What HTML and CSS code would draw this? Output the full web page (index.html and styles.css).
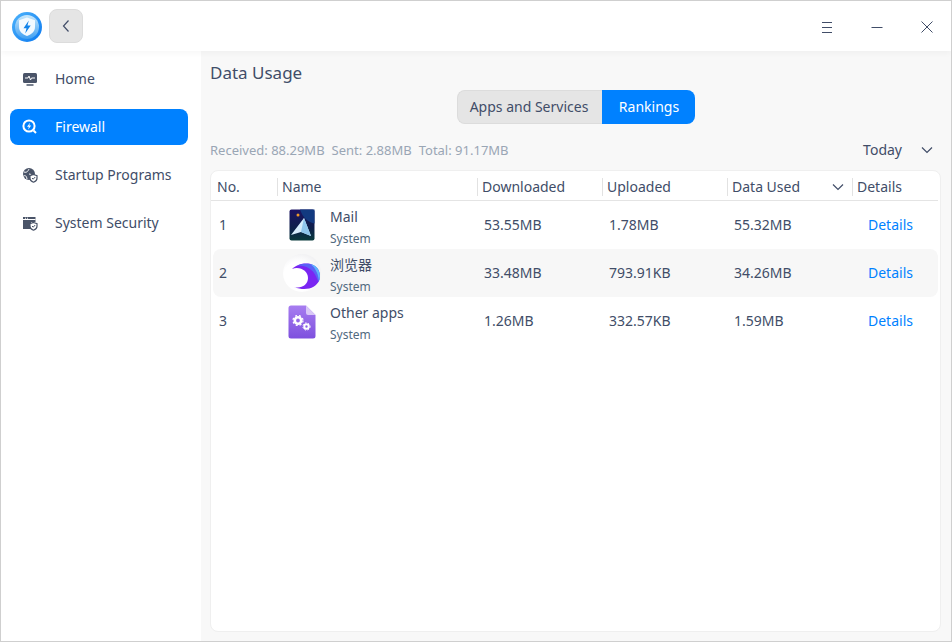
FILE: index.html
```html
<!DOCTYPE html>
<html lang="en">
<head>
    <meta charset="UTF-8">
    <title>Firewall</title>
    <link rel="stylesheet" href="styles.css">
</head>
<body>
<div class="window">
    <header class="title-bar">
        <svg class="app-logo" width="32" height="32" viewBox="0 0 32 32">
            <defs>
                <linearGradient id="logoRing" x1="0" y1="0" x2="1" y2="1">
                    <stop offset="0" stop-color="#4fb4fb"/>
                    <stop offset="1" stop-color="#0a78f0"/>
                </linearGradient>
                <linearGradient id="logoInner" x1="0" y1="0" x2="0" y2="1">
                    <stop offset="0" stop-color="#c9e8fb"/>
                    <stop offset="1" stop-color="#3f9ff2"/>
                </linearGradient>
            </defs>
            <circle cx="16" cy="16" r="15" fill="url(#logoRing)"/>
            <circle cx="16" cy="16" r="12" fill="url(#logoInner)"/>
            <path d="M16 6.500l8 2.800v6.500c0 4.600-3.200 7.700-8 9.200-4.800-1.500-8-4.600-8-9.200V9.300z" fill="#f4faff"/>
            <path d="M17.800 9.500l-5.300 7.700h3l-1.300 5.300 5.500-8h-3.200z" fill="#1283ea"/>
        </svg>
        <button class="back-btn">
            <svg width="10" height="14" viewBox="0 0 10 14"><path d="M7.500 1.500L2.500 7l5 5.500" fill="none" stroke="#414d68" stroke-width="1.200"/></svg>
        </button>
        <div class="win-controls">
            <svg width="12" height="12" viewBox="0 0 12 12"><path d="M1 1.500h10M1 6.500h10M1 11.500h10" stroke="#414d68" stroke-width="1"/></svg>
            <svg width="12" height="12" viewBox="0 0 12 12"><path d="M0.500 6.500h11" stroke="#414d68" stroke-width="1"/></svg>
            <svg width="12" height="12" viewBox="0 0 12 12"><path d="M0.500 0.500l11 11M11.500 0.500l-11 11" stroke="#414d68" stroke-width="1"/></svg>
        </div>
    </header>

    <div class="content">
        <nav class="side-nav">
            <a class="nav-item" href="#">
                <svg width="16" height="16" viewBox="0 0 16 16">
                    <rect x="1" y="2" width="14" height="10" rx="1.500" fill="#4a5468"/>
                    <path d="M3 7h3l1-2 1.500 4 1-2h3.500" fill="none" stroke="#fff" stroke-width="1"/>
                    <path d="M4.500 14h7" stroke="#4a5468" stroke-width="1.500"/>
                </svg>
                Home
            </a>
            <a class="nav-item active" href="#">
                <svg width="16" height="16" viewBox="0 0 16 16">
                    <circle cx="7" cy="7" r="5.600" fill="none" stroke="#fff" stroke-width="2"/>
                    <path d="M8.200 3.500L5 7.800h1.900l-.9 3 3.200-4.400H7.200z" fill="#fff"/>
                    <path d="M11.500 11.500l2.500 2.500" stroke="#fff" stroke-width="2"/>
                </svg>
                Firewall
            </a>
            <a class="nav-item" href="#">
                <svg width="16" height="16" viewBox="0 0 16 16">
                    <circle cx="7" cy="7" r="6" fill="#4a5468"/>
                    <path d="M2 5c3 1 4-1 5-3M7 7c2 0 3 1 2 4M1.500 9c2-1 3 0 3.500 3" fill="none" stroke="#fff" stroke-width="1"/>
                    <path d="M11.500 7.500l3.500 1.200v2.500c0 2-1.500 3.300-3.500 4-2-.7-3.500-2-3.500-4V8.700z" fill="#fff" stroke="#4a5468" stroke-width="1.200"/>
                    <path d="M10 11l1.200 1.200 2-2.200" fill="none" stroke="#4a5468" stroke-width="1"/>
                </svg>
                Startup Programs
            </a>
            <a class="nav-item" href="#">
                <svg width="16" height="16" viewBox="0 0 16 16">
                    <path d="M1 2h12.500v5H9v7H1z" fill="#4a5468"/>
                    <path d="M1 4.500h12.500" stroke="#fff" stroke-width="1"/>
                    <path d="M3 3.200h1M5 3.200h1" stroke="#fff" stroke-width="1"/>
                    <path d="M11.500 7.500l3.500 1.200v2.500c0 2-1.500 3.300-3.500 4-2-.7-3.500-2-3.500-4V8.700z" fill="#fff" stroke="#4a5468" stroke-width="1.200"/>
                    <path d="M10 11l1.200 1.200 2-2.200" fill="none" stroke="#4a5468" stroke-width="1"/>
                </svg>
                System Security
            </a>
        </nav>

        <main class="main-panel">
            <h1 class="page-title">Data Usage</h1>
            <div class="segment">
                <button class="segment-btn">Apps and Services</button>
                <button class="segment-btn selected">Rankings</button>
            </div>
            <div class="summary-row">
                <div class="summary">
                    <span>Received: 88.29MB</span>
                    <span>Sent: 2.88MB</span>
                    <span>Total: 91.17MB</span>
                </div>
                <div class="range-picker">
                    Today
                    <svg width="12" height="8" viewBox="0 0 12 8"><path d="M1 1.500l5 5 5-5" fill="none" stroke="#414d68" stroke-width="1.200"/></svg>
                </div>
            </div>

            <section class="usage-table">
                <div class="table-head">
                    <div class="head-cell">No.</div>
                    <div class="head-cell">Name</div>
                    <div class="head-cell">Downloaded</div>
                    <div class="head-cell">Uploaded</div>
                    <div class="head-cell sort-cell">
                        Data Used
                        <svg width="12" height="8" viewBox="0 0 12 8"><path d="M1 1.500l5 5 5-5" fill="none" stroke="#414d68" stroke-width="1.200"/></svg>
                    </div>
                    <div class="head-cell">Details</div>
                </div>

                <div class="table-row">
                    <div>1</div>
                    <div class="app-cell">
                        <span class="app-icon">
                            <svg width="32" height="36" viewBox="0 0 32 36">
                                <defs>
                                    <linearGradient id="mailBg" x1="0" y1="0" x2="0" y2="1">
                                        <stop offset="0" stop-color="#1c1464"/>
                                        <stop offset="0.6" stop-color="#0d1f4a"/>
                                        <stop offset="1" stop-color="#0a3a3c"/>
                                    </linearGradient>
                                </defs>
                                <rect x="2" y="1" width="28" height="34" rx="3" fill="#fff"/>
                                <rect x="3.500" y="2.500" width="25" height="31" rx="2" fill="url(#mailBg)"/>
                                <path d="M14 2.500h14.500v14c-6-1-12-6-14.500-14z" fill="#123a80"/>
                                <circle cx="12" cy="8" r="1.500" fill="#f09a2a"/>
                                <path d="M18 11L5 28l10-3 10 4z" fill="#d6ecfb"/>
                                <path d="M18 11l-3 14 10 4z" fill="#8fc5ec"/>
                            </svg>
                        </span>
                        <div class="app-text">
                            <span class="app-name">Mail</span>
                            <span class="app-source">System</span>
                        </div>
                    </div>
                    <div>53.55MB</div>
                    <div>1.78MB</div>
                    <div>55.32MB</div>
                    <a class="details-link" href="#">Details</a>
                </div>

                <div class="table-row striped">
                    <div>2</div>
                    <div class="app-cell">
                        <span class="app-icon">
                            <svg width="38" height="38" viewBox="0 0 38 38">
                                <defs>
                                    <radialGradient id="browserBall" cx="0.4" cy="0.6" r="0.65">
                                        <stop offset="0.6" stop-color="#fff"/>
                                        <stop offset="1" stop-color="#f0f0f2"/>
                                    </radialGradient>
                                </defs>
                                <circle cx="19" cy="19" r="19" fill="url(#browserBall)"/>
                                <path d="M9 15C14 10 24 8 30 11C36 14 38 22 36 27C33 33 24 38 11 33C18 35 25 31 25 24C25 17 17 12 9 15z" fill="#7a25f2"/>
                                <path d="M14 11.500C21 8.500 31 9 35 15C38 20 37 25 35.500 28C34 25 33 21 30 17.500C26 13 20 11 14 11.500z" fill="#5a62f6"/>
                                <path d="M27 10C31 10.500 34 13 35.500 16C37.500 20 37 24 36 27C35.500 22 34 18 32 15C31 13 29 11 27 10z" fill="#5db5fb"/>
                            </svg>
                        </span>
                        <div class="app-text">
                            <span class="app-name">浏览器</span>
                            <span class="app-source">System</span>
                        </div>
                    </div>
                    <div>33.48MB</div>
                    <div>793.91KB</div>
                    <div>34.26MB</div>
                    <a class="details-link" href="#">Details</a>
                </div>

                <div class="table-row">
                    <div>3</div>
                    <div class="app-cell">
                        <span class="app-icon doc-icon">
                            <svg width="28" height="34" viewBox="0 0 28 34">
                                <defs>
                                    <linearGradient id="otherBg" x1="0" y1="0" x2="0" y2="1">
                                        <stop offset="0" stop-color="#a77df0"/>
                                        <stop offset="1" stop-color="#7e50de"/>
                                    </linearGradient>
                                </defs>
                                <path d="M3 0.500h15l9.500 9.500v21a2.500 2.500 0 0 1-2.500 2.500H3A2.500 2.500 0 0 1 .5 31V3A2.500 2.500 0 0 1 3 .5z" fill="url(#otherBg)"/>
                                <path d="M18 .5l9.500 9.500H20a2 2 0 0 1-2-2z" fill="#d9c8f7"/>
                                <circle cx="10" cy="15.500" r="3.200" fill="none" stroke="#fff" stroke-width="2.600"/>
                                <circle cx="10" cy="15.500" r="5" fill="none" stroke="#fff" stroke-width="1.200" stroke-dasharray="2 2"/>
                                <circle cx="18.500" cy="21.500" r="2.200" fill="none" stroke="#fff" stroke-width="2"/>
                                <circle cx="18.500" cy="21.500" r="3.600" fill="none" stroke="#fff" stroke-width="1" stroke-dasharray="1.500 1.500"/>
                            </svg>
                        </span>
                        <div class="app-text">
                            <span class="app-name">Other apps</span>
                            <span class="app-source">System</span>
                        </div>
                    </div>
                    <div>1.26MB</div>
                    <div>332.57KB</div>
                    <div>1.59MB</div>
                    <a class="details-link" href="#">Details</a>
                </div>
            </section>
        </main>
    </div>
</div>
</body>
</html>
```

FILE: styles.css
```css
/* Reset some default styles */
body, h1 {
    margin: 0;
    padding: 0;
}

body {
    font-family: "Noto Sans", "Noto Sans CJK SC", sans-serif;
    font-size: 14px;
    line-height: 20px;
    color: #414d68;
    background-color: white;
}

.window {
    width: 952px;
    height: 642px;
    box-sizing: border-box;
    border: 1px solid #cfcfcf;
    display: flex;
    flex-direction: column;
    overflow: hidden;
}

.title-bar {
    height: 50px;
    flex-shrink: 0;
    display: flex;
    align-items: center;
    padding-left: 10px;
    background-color: white;
    box-shadow: 0 2px 6px rgba(0, 0, 0, 0.04);
    position: relative;
}

.app-logo {
    margin-top: 1px;
}

.back-btn {
    width: 34px;
    height: 34px;
    margin-left: 6px;
    padding: 0;
    display: flex;
    align-items: center;
    justify-content: center;
    background-color: #e5e5e5;
    border: 1px solid #dcdcdc;
    border-radius: 8px;
}

.win-controls {
    margin-left: auto;
    padding-right: 18px;
    display: flex;
    gap: 38px;
    margin-top: 2px;
}

.content {
    flex: 1;
    display: flex;
    min-height: 0;
}

.side-nav {
    width: 200px;
    flex-shrink: 0;
    box-sizing: border-box;
    padding: 10px 13px 0 9px;
    display: flex;
    flex-direction: column;
    gap: 12px;
    background-color: white;
}

.nav-item {
    height: 36px;
    display: flex;
    align-items: center;
    gap: 17px;
    padding-left: 12px;
    border-radius: 8px;
    color: #414d68;
    text-decoration: none;
}

.nav-item.active {
    background-color: #0081ff;
    color: white;
}

.main-panel {
    flex: 1;
    min-width: 0;
    box-sizing: border-box;
    padding: 0 10px 9px 9px;
    display: flex;
    flex-direction: column;
    background-color: #f8f8f8;
}

.page-title {
    font-size: 17px;
    font-weight: 400;
    line-height: 22px;
    margin-top: 11px;
    color: #414d68;
}

.segment {
    align-self: center;
    display: flex;
    margin: 6px 0 0 1px;
    height: 34px;
}

.segment-btn {
    font: inherit;
    color: #414d68;
    padding: 0 2px 0 0;
    width: 145px;
    background-color: #e5e5e5;
    border: 1px solid #dcdcdc;
    border-right: none;
    border-radius: 8px 0 0 8px;
}

.segment-btn.selected {
    width: 93px;
    padding: 0 0 0 1px;
    background-color: #0081ff;
    border: none;
    color: white;
    border-radius: 0 8px 8px 0;
}

.summary-row {
    display: flex;
    align-items: center;
    justify-content: space-between;
    height: 28px;
    margin-top: 12px;
    padding-right: 8px;
}

.summary {
    display: flex;
    gap: 7px;
    font-size: 13px;
    color: #9aa6b5;
}

.range-picker {
    display: flex;
    align-items: center;
    gap: 19px;
}

.usage-table {
    flex: 1;
    margin-top: 6px;
    background-color: white;
    border: 1px solid #efefef;
    border-radius: 8px;
}

.table-head,
.table-row {
    display: grid;
    align-items: center;
}

.table-head {
    grid-template-columns: 66px 200px 125px 125px 125px 1fr;
    box-sizing: border-box;
    height: 30px;
    align-items: start;
    border-bottom: 1px solid #e4e4e4;
    margin-right: 2px;
}

.head-cell {
    height: 18px;
    line-height: 18px;
    margin-top: 7px;
    padding-left: 4px;
    border-left: 1px solid #e2e2e2;
    box-sizing: border-box;
}

.head-cell:first-child {
    border-left: none;
    padding-left: 6px;
}

.sort-cell {
    display: flex;
    align-items: center;
    justify-content: space-between;
    padding-right: 8px;
}

.table-row {
    grid-template-columns: 64px 201px 125px 125px 125px 1fr;
    height: 48px;
    margin: 0 2px;
}

.table-row > div {
    padding-left: 6px;
}

.table-row.striped {
    background-color: #f7f7f7;
    border-radius: 8px;
}

.table-row > .app-cell {
    padding-left: 0;
}

.app-cell {
    display: flex;
    align-items: center;
    height: 48px;
}

.app-icon {
    width: 48px;
    margin-left: 1px;
    display: flex;
    justify-content: center;
}

.doc-icon {
    margin-top: 2px;
}

.app-text {
    display: flex;
    flex-direction: column;
    margin-left: 4px;
}

.app-name {
    line-height: 20px;
    margin-top: 4px;
}

.app-source {
    font-size: 12px;
    line-height: 17px;
    margin-top: 3px;
    color: #526a7f;
}

.details-link {
    color: #0081ff;
    text-decoration: none;
    padding-left: 15px;
}
```
